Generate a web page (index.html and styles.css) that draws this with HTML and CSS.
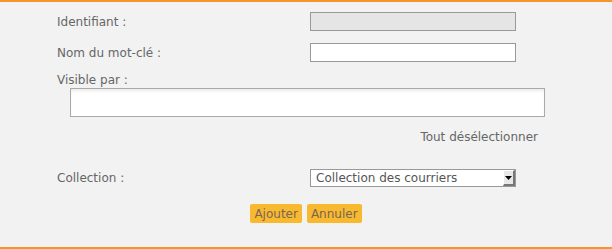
FILE: index.html
```html
<!DOCTYPE html>
<html lang="fr">
<head>
  <meta charset="UTF-8" />
  <title>Mot-clé</title>
  <link rel="stylesheet" href="styles.css">
</head>
<body>
  <div class="panel">
    <form class="keyword-form" onsubmit="return false;">
      <div class="form-row">
        <label for="ident">Identifiant :</label>
        <input type="text" id="ident" class="field readonly" readonly>
      </div>
      <div class="form-row">
        <label for="name">Nom du mot-clé :</label>
        <input type="text" id="name" class="field">
      </div>
      <div class="visible-block">
        <label>Visible par :</label>
        <div class="visible-box"></div>
        <div class="deselect"><a href="#">Tout désélectionner</a></div>
      </div>
      <div class="form-row collection-row">
        <label>Collection :</label>
        <div class="select">
          <span class="select-text">Collection des courriers</span>
          <span class="select-arrow">
            <svg width="7" height="4" viewBox="0 0 7 4"><polygon points="0,0 7,0 3.5,4" fill="#000"/></svg>
          </span>
        </div>
      </div>
      <div class="actions">
        <button type="submit" class="btn">Ajouter</button>
        <button type="button" class="btn">Annuler</button>
      </div>
    </form>
  </div>
</body>
</html>
```

FILE: styles.css
```css
:root {
  --orange: #f7952d;
  --button: #f9b92f;
  --text: #666;
}

* {
  box-sizing: border-box;
}

body {
  margin: 0;
  background: #f2f2f2;
  font-family: "DejaVu Sans", Verdana, sans-serif;
  font-size: 12px;
  color: var(--text);
}

.panel {
  height: 249px;
  border-top: 2px solid var(--orange);
  border-bottom: 2px solid var(--orange);
}

.keyword-form {
  padding: 10px 0 0 57px;
}

.form-row {
  display: grid;
  grid-template-columns: 253px 206px;
  align-items: center;
  height: 19px;
  margin-bottom: 12px;
}

.field {
  width: 206px;
  height: 19px;
  margin: 0;
  border: 1px solid #999;
  background: #fff;
  font: inherit;
}

.field.readonly {
  background: #e5e5e5;
}

.visible-block {
  margin-top: -1px;
}

.visible-block label {
  display: block;
  line-height: 15px;
}

.visible-box {
  width: 475px;
  height: 29px;
  margin: 0 0 0 13px;
  background: #fff;
  border: 1px solid #aaa;
  box-shadow: inset 0 3px 4px -2px rgba(0, 0, 0, 0.12);
}

.deselect {
  width: 481px;
  text-align: right;
  margin-top: 13px;
  line-height: 15px;
}

.deselect a {
  color: var(--text);
  text-decoration: none;
}

.collection-row {
  margin-top: 24px;
  height: 18px;
}

.select {
  display: flex;
  width: 206px;
  height: 18px;
  border: 1px solid #999;
  background: #fff;
}

.select-text {
  flex: 1;
  padding-left: 5px;
  line-height: 16px;
  color: #555;
}

.select-arrow {
  width: 12px;
  display: flex;
  align-items: center;
  justify-content: center;
  background: #e8e8e8;
  border-left: 1px solid #fff;
  border-top: 1px solid #fff;
  border-right: 2px solid #777;
  border-bottom: 2px solid #777;
}

.actions {
  display: flex;
  justify-content: center;
  gap: 5px;
  margin: 17px 0 0 -57px;
}

.btn {
  height: 19px;
  padding: 0 4px;
  border: none;
  border-radius: 2px;
  background: var(--button);
  font: inherit;
  color: #7a6655;
  cursor: pointer;
}
```
